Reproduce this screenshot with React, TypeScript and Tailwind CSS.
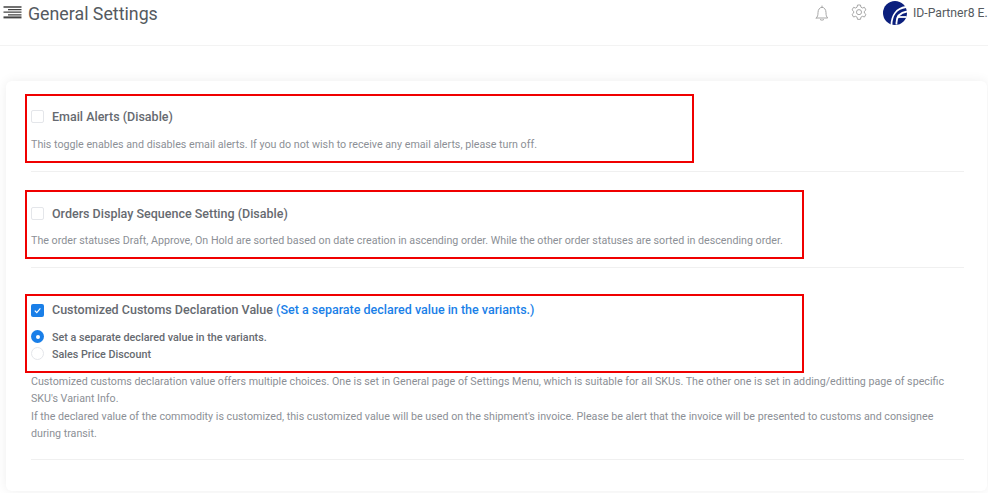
export default function App() {
  return (
    <div className="h-[493px] w-[988px] overflow-hidden bg-white font-['Roboto',sans-serif]">
      <header className="flex h-[46px] items-start border-b border-[#f3f3f3] bg-white">
        <svg className="ml-[3px] mt-[6px] h-[13px] w-[19px]" viewBox="0 0 19 13" fill="none" stroke="#444" strokeWidth="1.3">
          <path d="M0.5 1h18M5 3.6h13.500M0.500 6.200h18M5 8.800h13.500" />
          <path d="M0.500 11.400h18" strokeWidth="2" />
        </svg>
        <h1 className="ml-[6px] mt-[1px] text-[17.800px] leading-[26px] text-[#555a60]">General Settings</h1>
        <div className="ml-auto flex items-start">
          <svg className="mt-[5px] h-[16px] w-[16px]" viewBox="0 0 24 24" fill="none" stroke="#a0a0a0" strokeWidth="1.4" strokeLinecap="round" strokeLinejoin="round">
            <path d="M3.500 19.500h17c-1.800-2-2.500-4-2.500-8C18 7 15.500 3.500 12 3.500S6 7 6 11.500c0 4-.7 6-2.500 8Z" />
            <path d="M9.500 22c1.500 1 3.500 1 5 0M12 1.500v2" />
          </svg>
          <svg className="ml-[21px] mt-[4px] h-[16px] w-[16px]" viewBox="0 0 24 24" fill="none" stroke="#a0a0a0" strokeWidth="1.400" strokeLinejoin="round">
            <path d="M9.800 1.500h4.400l.7 3.200 2.200 1.300 3.100-1 2.200 3.800-2.400 2.200v2.500l2.400 2.200-2.200 3.800-3.100-1-2.200 1.300-.7 3.200H9.800l-.7-3.200-2.200-1.300-3.100 1-2.200-3.800L4 13.500V11L1.600 8.800l2.200-3.800 3.100 1 2.200-1.300z" />
            <circle cx="12" cy="12.200" r="3.800" />
          </svg>
          <svg className="ml-[16px] mt-[1px] h-[24px] w-[24px]" viewBox="0 0 24 24">
            <circle cx="12" cy="12" r="12" fill="#0b1f7d" />
            <path d="M8.500 24C8.500 15 13 7.500 23 6" fill="none" stroke="#fff" strokeWidth="1.800" />
            <path d="M13.500 23.500C13 17 15 12 24 10.500" fill="none" stroke="#fff" strokeWidth="1.800" />
            <path d="M14.500 16h9" fill="none" stroke="#fff" strokeWidth="1.800" />
          </svg>
          <span className="ml-[6px] mt-[3px] w-[75px] whitespace-nowrap text-[12.200px] leading-[20px] text-[#555a60]">ID-Partner8 E.</span>
        </div>
      </header>
      <main className="ml-[6px] mt-[35px] h-[410px] w-[981px] rounded-[6px] bg-white pl-[19px] pt-[13px] shadow-[0_0_12px_rgba(0,0,0,0.07)]">
        <section className="h-[69px] w-[669px] border-2 border-[#f00000] pl-[4px] pt-[10px]">
          <div className="flex h-[20px] items-center">
            <span className="h-[13px] w-[13px] rounded-[2px] border border-[#e4e6ea] bg-white" />
            <span className="ml-[8px] mt-[2px] text-[12.500px] font-medium leading-[20px] text-[#666a70]">Email Alerts (Disable)</span>
          </div>
          <p className="mt-[11px] text-[10.700px] leading-[16px] text-[#8c9096]">This toggle enables and disables email alerts. If you do not wish to receive any email alerts, please turn off.</p>
        </section>
        <div className="ml-[6px] mt-[8px] h-[1px] w-[933px] bg-[#f0f0f0]" />
        <section className="mt-[18px] h-[69px] w-[779px] border-2 border-[#f00000] pl-[4px] pt-[11px]">
          <div className="flex h-[20px] items-center">
            <span className="h-[13px] w-[13px] rounded-[2px] border border-[#e4e6ea] bg-white" />
            <span className="ml-[8px] mt-[2px] text-[12.500px] font-medium leading-[20px] text-[#666a70]">Orders Display Sequence Setting (Disable)</span>
          </div>
          <p className="mt-[10px] text-[10.700px] leading-[16px] text-[#8c9096]">The order statuses Draft, Approve, On Hold are sorted based on date creation in ascending order. While the other order statuses are sorted in descending order.</p>
        </section>
        <div className="ml-[6px] mt-[8px] h-[1px] w-[933px] bg-[#f0f0f0]" />
        <section className="mt-[26px] h-[79px] w-[779px] border-2 border-[#f00000] pl-[4px] pt-[4px]">
          <div className="flex h-[20px] items-center">
            <span className="flex h-[13px] w-[13px] items-center justify-center rounded-[2px] bg-[#1a7fe8]">
              <svg className="h-[9px] w-[9px]" viewBox="0 0 10 10" fill="none" stroke="#fff" strokeWidth="1.300"><path d="M2 5.200 4.200 7.400 8.200 2.600" /></svg>
            </span>
            <span className="ml-[8px] text-[12.500px] font-medium leading-[20px] text-[#666a70]">Customized Customs Declaration Value <span className="text-[#1a7fe8]">(Set a separate declared value in the variants.)</span></span>
          </div>
          <div className="mt-[8px] flex h-[17px] items-center">
            <span className="flex h-[13px] w-[13px] items-center justify-center rounded-full bg-[#1a7fe8]"><span className="h-[4px] w-[4px] rounded-full bg-white" /></span>
            <span className="ml-[8px] mt-[2px] text-[10.750px] font-medium leading-[17px] text-[#666a70]">Set a separate declared value in the variants.</span>
          </div>
          <div className="flex h-[17px] items-center">
            <span className="h-[13px] w-[13px] rounded-full border border-[#e4e6ea] bg-white" />
            <span className="ml-[8px] mt-[2px] text-[10.750px] font-medium leading-[17px] text-[#666a70]">Sales Price Discount</span>
          </div>
        </section>
        <div className="ml-[6px] w-[933px] text-[10.700px] leading-[17px] text-[#8c9096]">
          <p>Customized customs declaration value offers multiple choices. One is set in General page of Settings Menu, which is suitable for all SKUs. The other one is set in adding/editting page of specific SKU's Variant Info.</p>
          <p className="mt-[1px]">If the declared value of the commodity is customized, this customized value will be used on the shipment's invoice. Please be alert that the invoice will be presented to customs and consignee during transit.</p>
        </div>
        <div className="ml-[6px] mt-[17px] h-[1px] w-[933px] bg-[#f0f0f0]" />
      </main>
    </div>
  );
}
